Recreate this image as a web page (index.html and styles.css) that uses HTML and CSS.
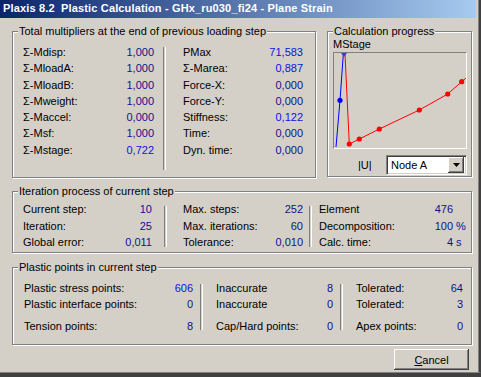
FILE: index.html
```html
<!DOCTYPE html>
<html lang="en">
<head>
    <meta charset="UTF-8">
    <title>Plastic Calculation</title>
    <link rel="stylesheet" href="styles.css">
</head>
<body>
    <div class="window">
        <div class="titlebar">Plaxis 8.2&nbsp; Plastic Calculation - GHx_ru030_fi24 - Plane Strain</div>

        <div class="client">
            <div class="top-row">
                <!-- Total multipliers -->
                <div class="group group-totals">
                    <span class="group-title">Total multipliers at the end of previous loading step</span>
                    <div class="cols">
                        <div class="col totals-a">
                            <div class="row"><span>&Sigma;-Mdisp:</span><span class="val">1,000</span></div>
                            <div class="row"><span>&Sigma;-MloadA:</span><span class="val">1,000</span></div>
                            <div class="row"><span>&Sigma;-MloadB:</span><span class="val">1,000</span></div>
                            <div class="row"><span>&Sigma;-Mweight:</span><span class="val">1,000</span></div>
                            <div class="row"><span>&Sigma;-Maccel:</span><span class="val">0,000</span></div>
                            <div class="row"><span>&Sigma;-Msf:</span><span class="val">1,000</span></div>
                            <div class="row"><span>&Sigma;-Mstage:</span><span class="val changed">0,722</span></div>
                        </div>
                        <div class="sep totals-sep"></div>
                        <div class="col totals-b">
                            <div class="row"><span>PMax</span><span class="val changed">71,583</span></div>
                            <div class="row"><span>&Sigma;-Marea:</span><span class="val changed">0,887</span></div>
                            <div class="row"><span>Force-X:</span><span class="val">0,000</span></div>
                            <div class="row"><span>Force-Y:</span><span class="val">0,000</span></div>
                            <div class="row"><span>Stiffness:</span><span class="val changed">0,122</span></div>
                            <div class="row"><span>Time:</span><span class="val">0,000</span></div>
                            <div class="row"><span>Dyn. time:</span><span class="val">0,000</span></div>
                        </div>
                    </div>
                </div>

                <!-- Calculation progress -->
                <div class="group group-progress">
                    <span class="group-title">Calculation progress</span>
                    <div class="axis-label">MStage</div>
                    <div class="chart">
                        <svg width="132" height="95" viewBox="0 0 132 95">
                            <polyline points="2,94 6,47.3 9.3,1.5" fill="none" stroke="#0000ff" stroke-width="1"/>
                            <circle cx="6" cy="47.3" r="2.6" fill="#0000ff"/>
                            <polyline points="11,1.5 15.3,91 25.3,86 45.3,76 85.3,57 113.7,41 127.7,28.7 132,25" fill="none" stroke="#ff0000" stroke-width="1"/>
                            <circle cx="15.3" cy="91" r="2.6" fill="#ff0000"/>
                            <circle cx="25.3" cy="86" r="2.6" fill="#ff0000"/>
                            <circle cx="45.3" cy="76" r="2.6" fill="#ff0000"/>
                            <circle cx="85.3" cy="57" r="2.6" fill="#ff0000"/>
                            <circle cx="113.7" cy="41" r="2.6" fill="#ff0000"/>
                            <circle cx="127.7" cy="28.7" r="2.6" fill="#ff0000"/>
                            <polygon points="7,0 13,0 10,4" fill="#4040c0"/>
                        </svg>
                    </div>
                    <div class="node-row">
                        <span class="u-label">|U|</span>
                        <div class="combo">
                            <span class="combo-text">Node A</span>
                            <span class="combo-btn">
                                <svg width="7" height="4" viewBox="0 0 7 4"><polygon points="0,0 7,0 3.5,4" fill="#000"/></svg>
                            </span>
                        </div>
                    </div>
                </div>
            </div>

            <!-- Iteration process -->
            <div class="group group-iter">
                <span class="group-title">Iteration process of current step</span>
                <div class="cols">
                    <div class="col iter-a">
                        <div class="row"><span>Current step:</span><span class="val">10</span></div>
                        <div class="row"><span>Iteration:</span><span class="val">25</span></div>
                        <div class="row"><span>Global error:</span><span class="val">0,011</span></div>
                    </div>
                    <div class="sep iter-sep1"></div>
                    <div class="col iter-b">
                        <div class="row"><span>Max. steps:</span><span class="val">252</span></div>
                        <div class="row"><span>Max. iterations:</span><span class="val">60</span></div>
                        <div class="row"><span>Tolerance:</span><span class="val">0,010</span></div>
                    </div>
                    <div class="sep iter-sep2"></div>
                    <div class="col iter-c">
                        <div class="row"><span>Element</span><span class="val num">476</span><span class="unit"></span></div>
                        <div class="row"><span>Decomposition:</span><span class="val num">100</span><span class="unit">&nbsp;%</span></div>
                        <div class="row"><span>Calc. time:</span><span class="val num">4</span><span class="unit">&nbsp;s</span></div>
                    </div>
                </div>
            </div>

            <!-- Plastic points -->
            <div class="group group-plastic">
                <span class="group-title">Plastic points in current step</span>
                <div class="cols">
                    <div class="col plastic-a">
                        <div class="row"><span>Plastic stress points:</span><span class="val changed">606</span></div>
                        <div class="row"><span>Plastic interface points:</span><span class="val">0</span></div>
                        <div class="row row-gap"><span>Tension points:</span><span class="val">8</span></div>
                    </div>
                    <div class="sep plastic-sep"></div>
                    <div class="col plastic-b">
                        <div class="row"><span>Inaccurate</span><span class="val">8</span></div>
                        <div class="row"><span>Inaccurate</span><span class="val">0</span></div>
                        <div class="row row-gap"><span>Cap/Hard points:</span><span class="val">0</span></div>
                    </div>
                    <div class="sep plastic-sep"></div>
                    <div class="col plastic-c">
                        <div class="row"><span>Tolerated:</span><span class="val">64</span></div>
                        <div class="row"><span>Tolerated:</span><span class="val">3</span></div>
                        <div class="row row-gap"><span>Apex points:</span><span class="val">0</span></div>
                    </div>
                </div>
            </div>

            <div class="buttons">
                <button class="btn"><u>C</u>ancel</button>
            </div>
        </div>
    </div>
</body>
</html>
```

FILE: styles.css
```css
body {
    margin: 0;
    background: #404040;
    font-family: "Liberation Sans", Arial, sans-serif;
    font-size: 11px;
    color: #000;
}

/* Window frame */
.window {
    width: 481px;
    height: 373px;
    box-sizing: border-box;
    background: #d4d0c8;
    border-right: 2px solid #404040;
    border-bottom: 1px solid #808080;
    box-shadow: inset -1px 0 0 #808080;
}

.titlebar {
    height: 18px;
    margin-right: 3px;
    padding-left: 3px;
    line-height: 17px;
    color: #fff;
    font-weight: bold;
    font-size: 11px;
    letter-spacing: 0.15px;
    white-space: nowrap;
    background: linear-gradient(to right, #0a246a, #a6caf0);
}

.client {
    padding: 13px 7px 0 12px;
}

.top-row {
    display: flex;
    gap: 11px;
}

/* Etched group box */
.group {
    position: relative;
    box-sizing: border-box;
    border: 1px solid #808080;
    box-shadow: 1px 1px 0 #fff, inset 1px 1px 0 #fff;
}

.group-title {
    position: absolute;
    top: -7px;
    left: 5px;
    padding: 0 1px;
    line-height: 13px;
    background: #d4d0c8;
    white-space: nowrap;
}

.cols {
    display: flex;
}

.row {
    display: flex;
    justify-content: space-between;
    white-space: nowrap;
}

.val {
    color: #10108a;
}

.val.changed {
    color: #1010e0;
}

/* vertical etched divider */
.sep {
    width: 1px;
    border-left: 1px solid #808080;
    border-right: 1px solid #fff;
    flex: none;
}

/* Totals */
.group-totals {
    width: 304px;
    height: 147px;
    padding: 12px 0 0 10px;
}

.group-totals .row {
    line-height: 16.3px;
}

.totals-a { width: 131px; }
.totals-b { width: 120px; }

.totals-sep {
    margin: 3px 17px 0 9px;
    height: 123px;
}

/* Calculation progress */
.group-progress {
    width: 145px;
    height: 146px;
    padding: 6px 0 0 5px;
}

.axis-label {
    line-height: 12px;
}

.chart {
    margin-top: 2px;
    width: 134px;
    height: 97px;
    box-sizing: border-box;
    border: 1px solid;
    border-color: #808080 #fff #fff #808080;
}

.chart svg {
    display: block;
    overflow: hidden;
}

.node-row {
    display: flex;
    align-items: center;
    margin-top: 6px;
}

.u-label {
    margin-left: 25px;
    width: 28px;
}

.combo {
    width: 81px;
    height: 20px;
    box-sizing: border-box;
    display: flex;
    align-items: center;
    justify-content: space-between;
    background: #fff;
    border: 1px solid;
    border-color: #808080 #fff #fff #808080;
    box-shadow: inset 1px 1px 0 #404040, inset -1px -1px 0 #d4d0c8;
    padding: 2px;
}

.combo-text {
    padding-left: 2px;
}

.combo-btn {
    width: 16px;
    height: 16px;
    box-sizing: border-box;
    display: flex;
    align-items: center;
    justify-content: center;
    background: #d4d0c8;
    box-shadow: inset -1px -1px 0 #404040, inset 1px 1px 0 #fff, inset -2px -2px 0 #808080;
}

.combo-btn svg {
    display: block;
}

/* Iteration process */
.group-iter {
    width: 460px;
    height: 62px;
    margin-top: 13px;
    padding: 9px 0 0 10px;
}

.group-iter .row {
    line-height: 16.5px;
}

.iter-a { width: 129px; }
.iter-b { width: 120px; }
.iter-c { width: 147px; }

.iter-sep1 {
    margin: 5px 16px 0 12px;
    height: 41px;
}

.iter-sep2 {
    margin: 5px 7px 0 6px;
    height: 41px;
}

.iter-c .num {
    margin-left: auto;
}

.unit {
    width: 13px;
    color: #10108a;
}

/* Plastic points */
.group-plastic {
    width: 460px;
    height: 78px;
    margin-top: 14px;
    padding: 12px 0 0 11px;
}

.group-plastic .row {
    line-height: 16px;
}

.group-plastic .row-gap {
    margin-top: 6px;
}

.plastic-a { width: 169px; }
.plastic-b { width: 117px; }
.plastic-c { width: 107px; }

.plastic-sep {
    margin: 4px 13px 0 7px;
    height: 46px;
}

/* Buttons */
.buttons {
    display: flex;
    justify-content: flex-end;
    padding: 4px 3px 0 0;
}

.btn {
    width: 75px;
    height: 21px;
    padding: 0;
    border: none;
    background: #d4d0c8;
    font-family: "Liberation Sans", Arial, sans-serif;
    font-size: 11px;
    color: #000;
    box-shadow: inset -1px -1px 0 #404040, inset 1px 1px 0 #fff, inset -2px -2px 0 #808080;
}
```
